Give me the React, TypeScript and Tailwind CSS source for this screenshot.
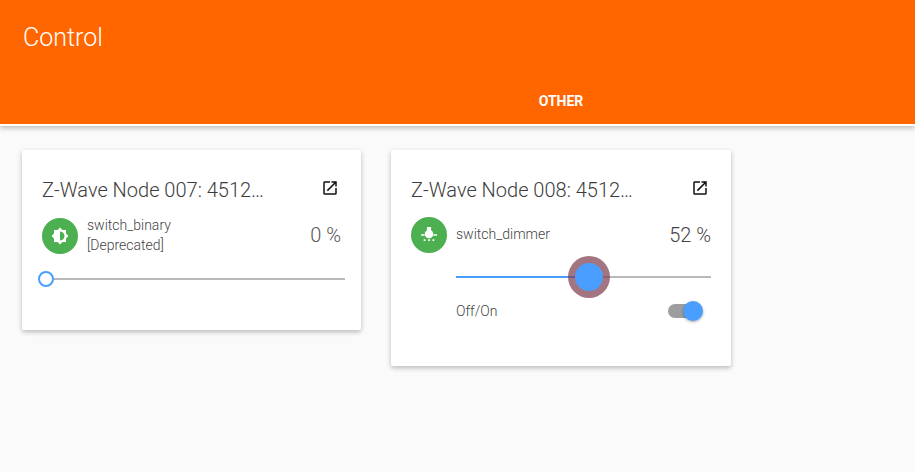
const OpenIcon = () => (
	<svg viewBox="0 0 24 24" className="w-[18px] h-[18px] fill-[#111111]">
		<path d="M14,3V5H17.59L7.76,14.83L9.17,16.24L19,6.41V10H21V3M19,19H5V5H12V3H5C3.89,3 3,3.9 3,5V19A2,2 0 0,0 5,21H19A2,2 0 0,0 21,19V12H19V19Z" />
	</svg>
);

const BrightnessIcon = () => (
	<svg viewBox="0 0 24 24" className="w-[18px] h-[18px] fill-white">
		<path
			fillRule="evenodd"
			d="M12,18V6A6,6 0 0,1 18,12A6,6 0 0,1 12,18M20,15.31L23.31,12L20,8.69V4H15.31L12,0.69L8.69,4H4V8.69L0.69,12L4,15.31V20H8.69L12,23.31L15.31,20H20V15.31Z"
		/>
	</svg>
);

const SpotIcon = () => (
	<svg viewBox="0 0 24 24" className="w-[20px] h-[20px] fill-white">
		<path d="M9.5,2.4H14.5V6.2A5.2,5.2 0 1,1 9.5,6.2Z" />
		<path d="M2.5,11H6.6V13H2.5ZM17.4,11H21.5V13H17.4ZM5.6,17H7.8V19.2H5.6ZM10.9,17H13.1V19.2H10.9ZM16.2,17H18.4V19.2H16.2Z" />
	</svg>
);

const CardHeader = ({ title }: { title: string }) => (
	<div className="flex items-start justify-between pr-[2px]">
		<span className="text-[20px] leading-[28px] font-light text-[#3c3c3c] pt-[1px]">
			{title}
		</span>
		<span className="block mt-[4px]">
			<OpenIcon />
		</span>
	</div>
);

export default function App() {
	return (
		<div className="min-h-[472px] bg-[#fafafa] font-['Roboto',sans-serif]">
			<header className="h-[126px] border-b-2 border-white bg-[#ff6600] shadow-[0_2px_5px_rgba(0,0,0,0.26)] flex flex-col justify-between">
				<h1 className="pl-[23px] pt-[22px] text-[25px] leading-[32px] font-light text-white">
					Control
				</h1>
				<div className="flex justify-center pl-[207px] pb-[15px]">
					<span className="text-[14px] leading-[16px] font-bold text-white">
						OTHER
					</span>
				</div>
			</header>

			<main className="flex items-start gap-[30px] pl-[22px] pt-[24px]">
				<section className="w-[339px] h-[180px] rounded-[2px] bg-white shadow-[0_2px_5px_rgba(0,0,0,0.26)] px-[20px] pt-[25px]">
					<CardHeader title="Z-Wave Node 007: 4512…" />
					<div className="mt-[11px] flex items-center">
						<div className="w-[36px] h-[36px] rounded-full bg-[#4caf50] flex items-center justify-center">
							<BrightnessIcon />
						</div>
						<div className="ml-[9px] pb-[2px] text-[14px] leading-[20px] font-light text-[#444444]">
							<div>switch_binary</div>
							<div>[Deprecated]</div>
						</div>
						<span className="ml-auto pb-[2px] text-[20px] leading-[28px] font-light text-[#555555]">
							0 %
						</span>
					</div>
					<div className="relative mt-[21px] ml-[4px] mr-[-4px] h-[2px] bg-[#b9b9b9]">
						<span className="absolute left-[-8px] top-[-7px] w-[16px] h-[16px] rounded-full border-2 border-[#4a9eff] bg-white" />
					</div>
				</section>

				<section className="w-[340px] h-[216px] rounded-[2px] bg-white shadow-[0_2px_5px_rgba(0,0,0,0.26)] px-[20px] pt-[25px]">
					<CardHeader title="Z-Wave Node 008: 4512…" />
					<div className="mt-[13px] flex items-center">
						<div className="w-[36px] h-[36px] rounded-full bg-[#4caf50] flex items-center justify-center">
							<SpotIcon />
						</div>
						<div className="ml-[9px] pb-[2px] text-[14px] leading-[20px] font-light text-[#444444]">
							switch_dimmer
						</div>
						<span className="ml-auto text-[20px] leading-[28px] font-light text-[#444444]">
							52 %
						</span>
					</div>
					<div className="ml-[45px]">
						<div className="relative mt-[23px] h-[2px] bg-[#b9b9b9]">
							<div className="h-full w-[133px] bg-[#4a9eff]" />
							<span className="absolute left-[112px] top-[-20px] w-[42px] h-[42px] rounded-full bg-[rgba(128,64,80,0.72)]" />
							<span className="absolute left-[119px] top-[-13px] w-[28px] h-[28px] rounded-full bg-[#4a9eff]" />
						</div>
						<div className="mt-[23px] flex items-center justify-between pr-[16px]">
							<span className="text-[14px] leading-[20px] font-light text-[#444444]">
								Off/On
							</span>
							<div className="relative w-[27px] h-[14px] rounded-full bg-[#9e9e9e]">
								<span className="absolute right-[-8px] top-[-3px] w-[20px] h-[20px] rounded-full bg-[#4a9eff] shadow-[0_1px_3px_rgba(0,0,0,0.35)]" />
							</div>
						</div>
					</div>
				</section>
			</main>
		</div>
	);
}
